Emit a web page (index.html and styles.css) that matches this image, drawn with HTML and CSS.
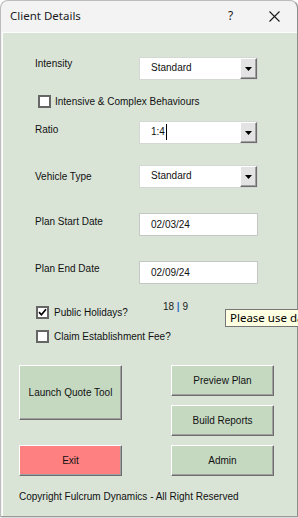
FILE: index.html
```html
<!DOCTYPE html>
<html lang="en">
<head>
    <meta charset="UTF-8">
    <title>Client Details</title>
    <link rel="stylesheet" href="styles.css">
</head>
<body>
    <div class="window">
        <div class="titlebar">
            <span class="title">Client Details</span>
            <span class="help">?</span>
            <span class="close">
                <svg width="11" height="11" viewBox="0 0 11 11"><path d="M0.5 0.5 L10.5 10.5 M10.5 0.5 L0.5 10.5" stroke="#1b1b1b" stroke-width="1.1" fill="none"/></svg>
            </span>
        </div>
        <div class="client">
            <div class="fields">
                <div class="field field-intensity">
                    <span class="field-label lbl-high">Intensity</span>
                    <div class="combo">
                        <span class="combo-value">Standard</span>
                        <span class="combo-btn"><svg width="7" height="4" viewBox="0 0 7 4"><polygon points="0,0 7,0 3.5,4" fill="#000"/></svg></span>
                    </div>
                </div>
                <label class="check check-intensive">
                    <span class="box"></span>
                    <span>Intensive &amp; Complex Behaviours</span>
                </label>
                <div class="field field-ratio">
                    <span class="field-label">Ratio</span>
                    <div class="combo">
                        <span class="combo-value">1:4<span class="caret"></span></span>
                        <span class="combo-btn"><svg width="7" height="4" viewBox="0 0 7 4"><polygon points="0,0 7,0 3.5,4" fill="#000"/></svg></span>
                    </div>
                </div>
                <div class="field field-vehicle">
                    <span class="field-label lbl-low">Vehicle Type</span>
                    <div class="combo">
                        <span class="combo-value">Standard</span>
                        <span class="combo-btn"><svg width="7" height="4" viewBox="0 0 7 4"><polygon points="0,0 7,0 3.5,4" fill="#000"/></svg></span>
                    </div>
                </div>
                <div class="field field-start">
                    <span class="field-label">Plan Start Date</span>
                    <div class="textbox">02/03/24</div>
                </div>
                <div class="field field-end">
                    <span class="field-label lbl-mid">Plan End Date</span>
                    <div class="textbox">02/09/24</div>
                </div>
                <div class="check-row check-holidays">
                    <label class="check">
                        <span class="box checked">
                            <svg width="9" height="9" viewBox="0 0 9 9"><path d="M1 4.2 L3.4 6.8 L8 1.2" stroke="#000" stroke-width="1.7" fill="none"/></svg>
                        </span>
                        <span>Public Holidays?</span>
                    </label>
                    <span class="counts">18 <span class="sep">|</span> 9</span>
                </div>
                <label class="check check-fee">
                    <span class="box"></span>
                    <span>Claim Establishment Fee?</span>
                </label>
            </div>
            <div class="actions">
                <button class="btn btn-launch">Launch Quote Tool</button>
                <button class="btn btn-preview">Preview Plan</button>
                <button class="btn btn-build">Build Reports</button>
                <button class="btn btn-exit">Exit</button>
                <button class="btn btn-admin">Admin</button>
            </div>
            <p class="copyright">Copyright Fulcrum Dynamics - All Right Reserved</p>
        </div>
        <div class="tooltip">Please use date format dd/mm/yy</div>
    </div>
</body>
</html>
```

FILE: styles.css
```css
:root {
    --form-bg: #d9e4d7;
    --btn-bg: #c5d9c1;
    --exit-bg: #ff8080;
    --text: #111;
    --edge-dark: #6d6d6d;
    --edge-mid: #a0a0a0;
}
html, body {
    margin: 0;
    padding: 0;
    width: 298px;
    height: 518px;
    overflow: hidden;
    background: #fff;
    font-family: 'Liberation Sans', Arial, sans-serif;
    font-size: 10px;
    color: var(--text);
}
.window {
    position: relative;
    width: 296px;
    height: 515px;
    border: 1px solid #bdbdbd;
    border-right-color: #8c8c8c;
    border-bottom-color: #9a9a9a;
    border-top-left-radius: 8px;
    border-top-right-radius: 8px;
    background: #f3f3f3;
    box-shadow: 1px 1px 2px rgba(0,0,0,0.2);
    display: flex;
    flex-direction: column;
}
.titlebar {
    box-sizing: border-box;
    height: 31px;
    padding: 0 0 2px 9px;
    display: flex;
    align-items: center;
    border-top-left-radius: 8px;
    border-top-right-radius: 8px;
}
.title {
    font-family: 'Noto Sans', 'Open Sans', sans-serif;
    font-size: 11.5px;
    color: #1b1b1b;
    width: 218px;
}
.help {
    font-family: 'Noto Sans', sans-serif;
    font-size: 12px;
    color: #1b1b1b;
    width: 41px;
}
.close {
    display: flex;
    margin-top: 1px;
}
.client {
    flex: 1;
    margin-left: 1px;
    background: var(--form-bg);
    border-top: 1px solid #fdfdfd;
    border-left: 1px solid #fdfdfd;
    padding: 24px 0 0 16px;
}
.fields {
    padding-left: 16px;
    display: flex;
    flex-direction: column;
}
.field {
    display: flex;
    align-items: flex-start;
    height: 23px;
}
.field-label {
    width: 104px;
    line-height: 12px;
    padding-top: 3px;
}
.field-label.lbl-high {
    padding-top: 1px;
}
.field-label.lbl-mid {
    padding-top: 2px;
}
.field-label.lbl-low {
    padding-top: 6px;
}
.combo, .textbox {
    box-sizing: border-box;
    width: 119px;
    height: 23px;
    background: #fff;
    border: 1px solid #d4d8d3;
    display: flex;
    align-items: center;
}
.combo-value {
    flex: 1;
    padding-left: 11px;
    padding-bottom: 2px;
    display: flex;
    align-items: center;
}
.caret {
    display: inline-block;
    width: 1px;
    height: 16px;
    margin-left: 1px;
    background: #000;
}
.combo-btn {
    box-sizing: border-box;
    width: 17px;
    height: 21px;
    background: #e3e3e3;
    border-top: 1px solid #fff;
    border-left: 1px solid #fff;
    border-right: 1px solid var(--edge-dark);
    border-bottom: 1px solid var(--edge-dark);
    box-shadow: inset -1px -1px 0 var(--edge-mid);
    display: flex;
    align-items: center;
    justify-content: center;
}
.textbox {
    padding-left: 11px;
    border-color: #c4c8c3;
}
.check {
    display: flex;
    align-items: center;
    height: 13px;
    line-height: 12px;
}
.box {
    box-sizing: border-box;
    width: 13px;
    height: 13px;
    border: 2px solid #666;
    background: #fff;
    margin-right: 5px;
    display: flex;
    align-items: center;
    justify-content: center;
}
.check-intensive {
    margin-top: 15px;
    margin-left: 3px;
}
.check-intensive .box {
    margin-right: 4px;
}
.field-ratio {
    margin-top: 13px;
}
.field-vehicle {
    margin-top: 21px;
}
.field-start {
    margin-top: 25px;
}
.field-end {
    margin-top: 25px;
}
.check-row {
    display: flex;
    align-items: flex-start;
}
.check-holidays {
    margin-top: 22px;
    margin-left: 1px;
}
.counts {
    margin-left: 35px;
    margin-top: -5px;
    line-height: 12px;
    color: #1a1a1a;
}
.counts .sep {
    color: #2f70c0;
    font-weight: bold;
}
.check-fee {
    margin-top: 11px;
    margin-left: 1px;
}
.actions {
    margin-top: 22px;
    display: grid;
    grid-template-columns: 103px 103px;
    grid-template-rows: 31px 31px 31px;
    column-gap: 49px;
    row-gap: 9px;
}
.btn {
    box-sizing: border-box;
    margin: 0;
    padding: 0;
    font-family: inherit;
    font-size: 10px;
    color: var(--text);
    background: var(--btn-bg);
    border-top: 1px solid #fff;
    border-left: 1px solid #fff;
    border-right: 1px solid var(--edge-dark);
    border-bottom: 1px solid var(--edge-dark);
    box-shadow: inset -1px -1px 0 var(--edge-mid);
    text-align: center;
}
.btn-launch {
    grid-column: 1;
    grid-row: 1 / span 2;
    height: 55px;
    align-self: start;
}
.btn-preview {
    grid-column: 2;
    grid-row: 1;
}
.btn-build {
    grid-column: 2;
    grid-row: 2;
}
.btn-exit {
    grid-column: 1;
    grid-row: 3;
    background: var(--exit-bg);
}
.btn-admin {
    grid-column: 2;
    grid-row: 3;
}
.copyright {
    margin: 15px 0 0 0;
    line-height: 12px;
}
.tooltip {
    position: absolute;
    left: 224px;
    top: 308px;
    height: 16px;
    padding: 0 4px;
    white-space: nowrap;
    background: #ffffe1;
    border: 1px solid #767676;
    font-family: 'Noto Sans', 'Open Sans', sans-serif;
    font-size: 11.5px;
    line-height: 16px;
    color: #000;
}
```
